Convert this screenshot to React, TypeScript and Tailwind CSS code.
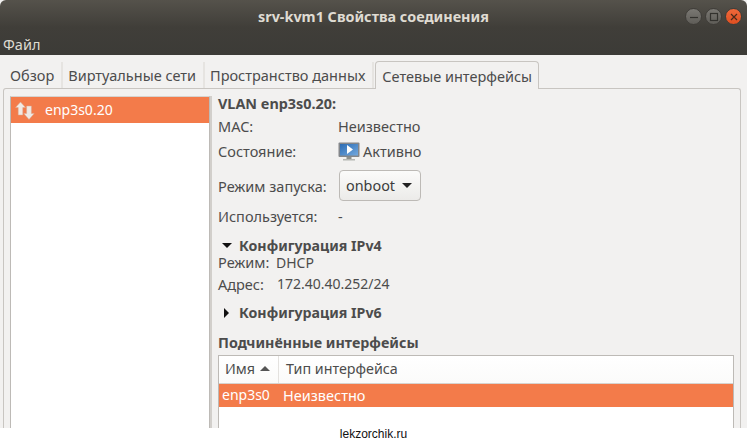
function Tab({ label, active }: { label: string; active?: boolean }) {
  return active ? (
    <div className="h-[28px] px-[6px] flex items-center bg-[#f2f1f0] border border-b-0 border-[#c8c5c1] rounded-t-[4px] text-[14.5px] leading-[18px] text-[#4c4c4c]">{label}</div>
  ) : (
    <div className="h-[26px] pl-[5px] pr-[7px] flex items-center border-r-2 border-[#e6e4e1] text-[14.5px] leading-[18px] text-[#4c4c4c] whitespace-nowrap">{label}</div>
  );
}

function Row({ label, children, w = "w-[120px]", lh = "leading-[18px]" }: { label: string; children: React.ReactNode; w?: string; lh?: string }) {
  return (
    <div className={`flex items-center text-[14.5px] text-[#4c4c4c] ${lh}`}>
      <div className={w}>{label}</div>
      {children}
    </div>
  );
}

function WinButton({ bg, children }: { bg: string; children: React.ReactNode }) {
  return (
    <div className={`w-[17px] h-[17px] rounded-full border border-[#3f3d39] flex items-center justify-center ${bg}`}>
      {children}
    </div>
  );
}

export default function App() {
  return (
    <div className="w-[747px] h-[441px] bg-white overflow-hidden flex flex-col font-['Noto_Sans',sans-serif]">
      <div className="h-[428px] shrink-0 bg-[#f2f1f0] flex flex-col overflow-hidden">
        <div className="h-[55px] shrink-0 rounded-t-[6px] bg-gradient-to-b from-[#55524b] via-[#403e39] to-[#3c3b37] flex flex-col">
          <div className="h-[33px] relative flex items-center justify-center">
            <span className="text-[14.4px] leading-[18px] font-bold text-[#dfdbd2]">srv-kvm1 Свойства соединения</span>
            <div className="absolute right-[5px] top-[8px] flex gap-[3px]">
              <WinButton bg="bg-gradient-to-b from-[#7a7873] to-[#5f5d58]">
                <svg width="10" height="10" viewBox="0 0 10 10"><path d="M1 5.5h8" stroke="#33322e" strokeWidth="1.2" /></svg>
              </WinButton>
              <WinButton bg="bg-gradient-to-b from-[#7a7873] to-[#5f5d58]">
                <svg width="10" height="10" viewBox="0 0 10 10"><rect x="1.5" y="1.5" width="7" height="7" fill="none" stroke="#33322e" strokeWidth="1.2" /></svg>
              </WinButton>
              <WinButton bg="bg-gradient-to-b from-[#f0683a] to-[#df4f20]">
                <svg width="10" height="10" viewBox="0 0 10 10"><path d="M2 2l6 6M8 2l-6 6" stroke="#4a2a1a" strokeWidth="1.2" /></svg>
              </WinButton>
            </div>
          </div>
          <div className="h-[22px] px-[3px] flex items-center text-[14.5px] leading-[18px] text-[#dfdbd2]">Файл</div>
        </div>

        <div className="flex-1 flex flex-col pl-[3px] pr-[6px] pt-[6px] min-h-0">
          <div className="flex items-end h-[28px] pl-[2px] shrink-0 relative z-10 -mb-px">
            <div className="flex items-center mb-[1px]">
              <Tab label="Обзор" />
              <Tab label="Виртуальные сети" />
              <Tab label="Пространство данных" />
            </div>
            <div className="ml-[1px]">
              <Tab label="Сетевые интерфейсы" active />
            </div>
          </div>

          <div className="flex-1 min-h-0 border border-b-0 border-[#c8c5c1] rounded-t-[3px] flex pl-[6px] pt-[7px] pr-[6px]">
            <div className="w-[200px] shrink-0 bg-white border-x border-[#bdbab6] border-t border-t-[#d6d3cf]">
              <div className="h-[26px] bg-[#f37b4a] flex items-center pl-[4px] gap-[10px] text-white text-[14px] leading-[18px]">
                <svg width="20" height="19" viewBox="0 0 20 19">
                  <path d="M5.5 1 L10.5 6.5 H7.8 V14 H3.2 V6.5 H0.5 Z" fill="#f1e9e3" stroke="#d8a68c" strokeWidth="0.5" />
                  <path d="M14 18.5 L8.8 12.5 H11.6 V5 H16.4 V12.5 H19.2 Z" fill="#efe8e3" stroke="#d8a68c" strokeWidth="0.5" />
                </svg>
                <span>enp3s0.20</span>
              </div>
            </div>

            <div className="w-[2px] shrink-0 bg-[#d2cfcb]" />

            <div className="flex-1 min-w-0 pl-[6px] flex flex-col -mt-[1px]">
              <div className="text-[14.4px] leading-[18px] font-bold text-[#4c4c4c]">VLAN enp3s0.20:</div>
              <div className="mt-[4px]"><Row label="MAC:"><span>Неизвестно</span></Row></div>
              <div className="mt-[7px]">
                <Row label="Состояние:">
                  <svg width="22" height="20" viewBox="0 0 22 20" className="mr-[3px] -my-[1px] translate-y-[1px]">
                    <defs>
                      <linearGradient id="scr" x1="0" y1="0" x2="1" y2="1">
                        <stop offset="0" stopColor="#2c6cb4" />
                        <stop offset="1" stopColor="#72a8de" />
                      </linearGradient>
                    </defs>
                    <rect x="0.5" y="0.5" width="21" height="14.5" rx="1" fill="#83868a" />
                    <rect x="2" y="2" width="18" height="11.5" fill="url(#scr)" />
                    <path d="M9 3 L15 7.5 L9 12 Z" fill="#fff" />
                    <path d="M8.5 15h5v2h-5z" fill="#8d908c" />
                    <path d="M5 17h12v1.5H5z" fill="#b5b6b3" />
                  </svg>
                  <span>Активно</span>
                </Row>
              </div>
              <div className="mt-[10px]">
                <Row label="Режим запуска:">
                  <div className="ml-[1px] h-[31px] w-[82px] rounded-[4px] border border-[#bdbab6] bg-gradient-to-b from-[#fbfbfa] to-[#ecebe9] flex items-center pl-[6px] gap-[7px] text-[14.4px] text-[#3c3c3c]">
                    <span>onboot</span>
                    <div className="w-0 h-0 border-x-[5px] border-x-transparent border-t-[5px] border-t-[#222]" />
                  </div>
                </Row>
              </div>
              <div className="mt-[6px]"><Row label="Используется:"><span>-</span></Row></div>
              <div className="mt-[12px] h-[17px] flex items-center text-[14.2px] leading-[17px] font-bold text-[#4c4c4c]">
                <div className="w-0 h-0 ml-[4px] mr-[7px] border-x-[5px] border-x-transparent border-t-[5px] border-t-[#111]" />
                Конфигурация IPv4
              </div>
              <div><Row label="Режим:" w="w-[58px]" lh="leading-[16px]"><span className="text-[14px] translate-y-[1px]">DHCP</span></Row></div>
              <div className="mt-[5px]"><Row label="Адрес:" w="w-[59px]"><span className="text-[14px]">172.40.40.252/24</span></Row></div>
              <div className="mt-[11px] flex items-center text-[14.2px] leading-[18px] font-bold text-[#4c4c4c]">
                <div className="w-0 h-0 ml-[6px] mr-[10px] border-y-[5px] border-y-transparent border-l-[5px] border-l-[#111]" />
                Конфигурация IPv6
              </div>
              <div className="mt-[12px] text-[14.3px] leading-[18px] font-bold text-[#4c4c4c]">Подчинённые интерфейсы</div>
              <div className="mt-[3px] flex-1 bg-white border-x border-t border-[#bdbab6] min-h-0">
                <div className="h-[28px] flex items-center border-b border-[#d6d3cf] bg-gradient-to-b from-white to-[#fbfbfa] text-[14.3px] leading-[18px] text-[#4c4c4c]">
                  <div className="w-[60px] h-full flex items-center pl-[6px] pb-[2px] gap-[5px] border-r border-[#e4e2df]">
                    Имя
                    <div className="w-0 h-0 border-x-[5px] border-x-transparent border-b-[5px] border-b-[#555]" />
                  </div>
                  <div className="pl-[7px] pb-[2px]">Тип интерфейса</div>
                </div>
                <div className="h-[23px] pb-[1px] bg-[#f37b4a] flex items-center text-white text-[14px] leading-[18px]">
                  <span className="w-[64px] pl-[3px]">enp3s0</span>
                  <span className="text-[14.5px]">Неизвестно</span>
                </div>
              </div>
            </div>
          </div>
        </div>
      </div>
      <div className="flex-1 flex justify-center">
        <span className="font-['Liberation_Sans',sans-serif] text-[12px] text-[#111] leading-[13px]">lekzorchik.ru</span>
      </div>
    </div>
  );
}
